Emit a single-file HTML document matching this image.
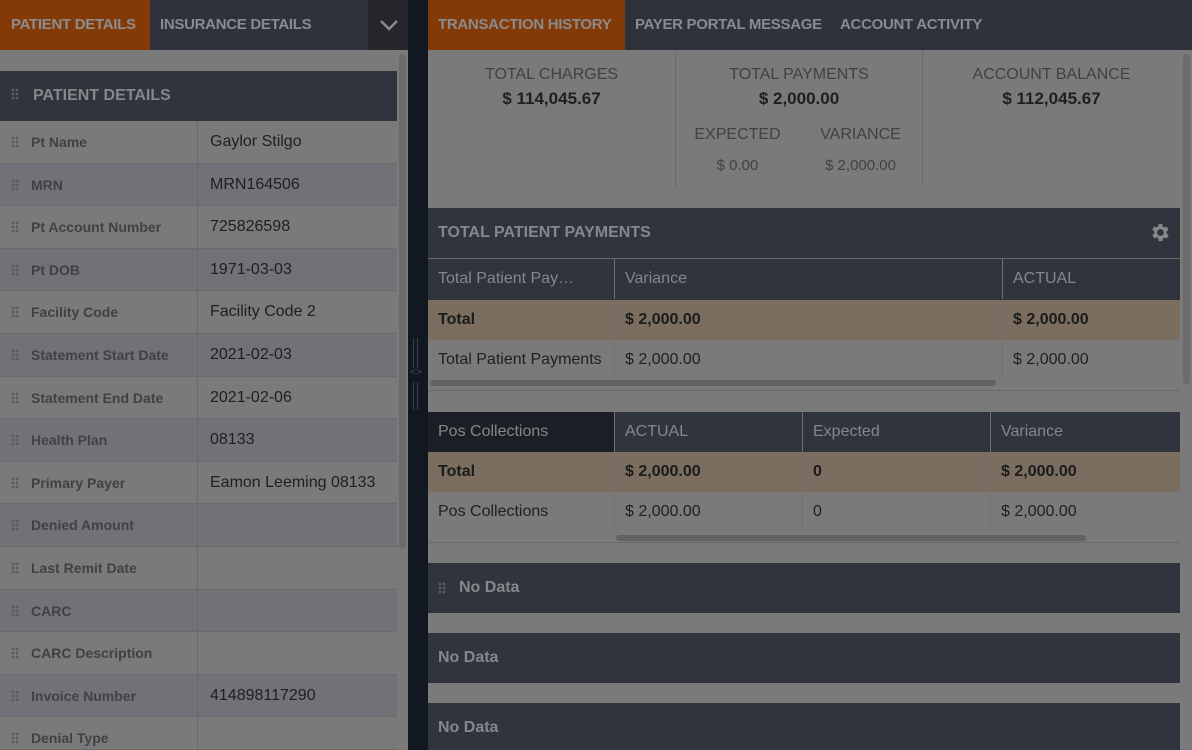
<!DOCTYPE html>
<html style="width:1192px;height:750px;overflow:hidden"><head><style>
*{box-sizing:border-box;margin:0;padding:0}
body{width:1192px;height:750px;overflow:hidden;background:#111820;font-family:"Liberation Sans",sans-serif;position:relative}
.abs{position:absolute}
.tab{position:absolute;top:0;height:50px;line-height:50px;font-size:15px;font-weight:bold;color:#8a8b8f;padding:0 10px;letter-spacing:-0.3px;white-space:nowrap}
.row{position:absolute;left:0;width:397px;height:42.6px;font-size:15px;border-bottom:1px solid #6a6a6a}
.row .l{position:absolute;left:0;top:0;width:198px;height:100%;border-right:1px solid #6a6a6a;padding-left:31px;line-height:42px;color:#3f4145;font-weight:bold;font-size:14px}
.row .v{position:absolute;left:210px;top:0;line-height:42px;color:#1e1f22;font-size:16px}
.dots{position:absolute;left:11px;top:15px;width:8px;height:12px;background:radial-gradient(circle,#5a5c60 1.3px,transparent 1.5px) 0 0/4px 4px}
.hdr{background:#30343c;color:#85878b;font-weight:bold;font-size:16px}
.cell{position:absolute;font-size:16px;line-height:40px;padding-left:10px;border-right:1px solid #707070}
</style></head><body>
<div class="abs" style="left:0;top:0;width:408px;height:750px;background:#7a7a7a"></div>
<div class="abs" style="left:0;top:0;width:408px;height:50px;background:#2f323b"></div>
<div class="abs" style="left:0;top:0;width:150px;height:50px;background:#833a06"></div>
<div class="tab" style="left:1px;color:#8c8d90">PATIENT DETAILS</div>
<div class="tab" style="left:150px">INSURANCE DETAILS</div>
<div class="abs" style="left:368px;top:0;width:40px;height:50px;background:#25272d"></div>
<svg class="abs" style="left:379px;top:18px" width="20" height="14"><path d="M2 3 L10 11 L18 3" stroke="#8a8b8f" stroke-width="2.5" fill="none"/></svg>
<div class="abs" style="left:399px;top:54px;width:7px;height:495px;background:#6c6c6c;border-radius:3px"></div>
<div class="abs hdr" style="left:0;top:71px;width:397px;height:50px;line-height:50px;padding-left:33px">PATIENT DETAILS</div>
<div class="dots" style="top:88px"></div>
<div id="rows"></div>
<div class="abs" style="left:428px;top:0;width:764px;height:750px;background:#7a7a7a"></div>
<div class="abs" style="left:428px;top:0;width:764px;height:50px;background:#2f323b"></div>
<div class="abs" style="left:428px;top:0;width:197px;height:50px;background:#833a06"></div>
<div class="tab" style="left:428px">TRANSACTION HISTORY</div>
<div class="tab" style="left:625px">PAYER PORTAL MESSAGE</div>
<div class="tab" style="left:830px">ACCOUNT ACTIVITY</div>
<div class="abs" style="left:1183px;top:54px;width:7px;height:330px;background:#6c6c6c;border-radius:3px"></div>
<div class="abs" style="left:675px;top:50px;width:1px;height:137px;background:#6a6a6a"></div>
<div class="abs" style="left:922px;top:50px;width:1px;height:137px;background:#6a6a6a"></div>
<div class="abs" style="left:428px;top:66px;width:247px;text-align:center;color:#3f4145;font-size:16px">TOTAL CHARGES<br><b style="color:#1e1f22;line-height:30px;font-size:17px">$ 114,045.67</b></div>
<div class="abs" style="left:676px;top:66px;width:246px;text-align:center;color:#3f4145;font-size:16px">TOTAL PAYMENTS<br><b style="color:#1e1f22;line-height:30px;font-size:17px">$ 2,000.00</b></div>
<div class="abs" style="left:923px;top:66px;width:257px;text-align:center;color:#3f4145;font-size:16px">ACCOUNT BALANCE<br><b style="color:#1e1f22;line-height:30px;font-size:17px">$ 112,045.67</b></div>
<div class="abs" style="left:676px;top:126px;width:123px;text-align:center;color:#3f4145;font-size:16px">EXPECTED<br><span style="line-height:44px;font-size:15px">$ 0.00</span></div>
<div class="abs" style="left:799px;top:126px;width:123px;text-align:center;color:#3f4145;font-size:16px">VARIANCE<br><span style="line-height:44px;font-size:15px">$ 2,000.00</span></div>
<div class="abs hdr" style="left:428px;top:208px;width:752px;height:50px;line-height:50px;padding-left:10px">TOTAL PATIENT PAYMENTS</div>
<svg class="abs" style="left:1148px;top:221px" width="23" height="23" viewBox="0 0 24 24"><path fill="#85878b" fill-rule="evenodd" d="M19.4 13a7.5 7.5 0 000-2l2.1-1.6-2-3.5-2.5 1a7 7 0 00-1.7-1L15 3h-4l-.4 2.7a7 7 0 00-1.7 1l-2.5-1-2 3.5L6.6 11a7.5 7.5 0 000 2l-2.1 1.6 2 3.5 2.5-1a7 7 0 001.7 1L11 21h4l.4-2.7a7 7 0 001.7-1l2.5 1 2-3.5zM13 15.5a3.5 3.5 0 110-7 3.5 3.5 0 010 7z"/></svg>
<div class="abs" style="left:428px;top:258px;width:752px;height:1px;background:#6a6a6a"></div>
<div class="abs" style="left:428px;top:259px;width:752px;height:41px;background:#30343c;color:#85878b">
<div class="cell" style="left:0;width:187px">Total Patient Pay…</div><div class="cell" style="left:187px;width:388px">Variance</div><div class="cell" style="left:575px;border:0">ACTUAL</div></div>
<div class="abs" style="left:428px;top:300px;width:752px;height:40px;background:#7b6e60;font-weight:bold;color:#1a1a1a">
<div class="cell" style="left:0;width:187px">Total</div><div class="cell" style="left:187px;width:388px">$ 2,000.00</div><div class="cell" style="left:575px;border:0">$ 2,000.00</div></div>
<div class="abs" style="left:428px;top:340px;width:752px;height:40px;color:#1e1f22">
<div class="cell" style="left:0;width:187px">Total Patient Payments</div><div class="cell" style="left:187px;width:388px">$ 2,000.00</div><div class="cell" style="left:575px;border:0">$ 2,000.00</div></div>
<div class="abs" style="left:430px;top:380px;width:566px;height:6px;background:#626262;border-radius:3px"></div>
<div class="abs" style="left:428px;top:390px;width:752px;height:1px;background:#6a6a6a"></div>
<div class="abs" style="left:428px;top:412px;width:752px;height:40px;background:#30343c;color:#85878b">
<div class="cell" style="left:0;width:187px;background:#1c1f25;height:40px">Pos Collections</div><div class="cell" style="left:187px;width:188px">ACTUAL</div><div class="cell" style="left:375px;width:188px">Expected</div><div class="cell" style="left:563px;border:0">Variance</div></div>
<div class="abs" style="left:428px;top:452px;width:752px;height:40px;background:#7b6e60;font-weight:bold;color:#1a1a1a">
<div class="cell" style="left:0;width:187px">Total</div><div class="cell" style="left:187px;width:188px">$ 2,000.00</div><div class="cell" style="left:375px;width:188px">0</div><div class="cell" style="left:563px;border:0">$ 2,000.00</div></div>
<div class="abs" style="left:428px;top:492px;width:752px;height:40px;color:#1e1f22">
<div class="cell" style="left:0;width:187px">Pos Collections</div><div class="cell" style="left:187px;width:188px">$ 2,000.00</div><div class="cell" style="left:375px;width:188px">0</div><div class="cell" style="left:563px;border:0">$ 2,000.00</div></div>
<div class="abs" style="left:616px;top:535px;width:470px;height:6px;background:#626262;border-radius:3px"></div>
<div class="abs" style="left:428px;top:542px;width:752px;height:1px;background:#6a6a6a"></div>
<div class="abs hdr" style="left:428px;top:563px;width:752px;height:50px;line-height:50px;padding-left:31px">No Data</div>
<div class="dots" style="left:438px;top:582px"></div>
<div class="abs hdr" style="left:428px;top:633px;width:752px;height:50px;line-height:50px;padding-left:10px">No Data</div>
<div class="abs hdr" style="left:428px;top:703px;width:752px;height:47px;line-height:50px;padding-left:10px">No Data</div>
<div class="abs" style="left:413px;top:338px;width:5px;height:30px;border-left:1px solid #3a4048;border-right:1px solid #3a4048"></div>
<div class="abs" style="left:410px;top:367px;color:#4a5058;font-size:10px">&lt;&gt;</div>
<div class="abs" style="left:413px;top:382px;width:5px;height:28px;border-left:1px solid #3a4048;border-right:1px solid #3a4048"></div>
<script>
var d=[["Pt Name","Gaylor Stilgo"],["MRN","MRN164506"],["Pt Account Number","725826598"],["Pt DOB","1971-03-03"],["Facility Code","Facility Code 2"],["Statement Start Date","2021-02-03"],["Statement End Date","2021-02-06"],["Health Plan","08133"],["Primary Payer","Eamon Leeming 08133"],["Denied Amount",""],["Last Remit Date",""],["CARC",""],["CARC Description",""],["Invoice Number","414898117290"],["Denial Type",""]];
var h="";d.forEach(function(r,i){var t=121+i*42.6;var hh=Math.min(42.6,750-t);h+='<div class="row" style="top:'+t+'px;height:'+hh+'px;overflow:hidden;background:'+(i%2?'#707278':'#7a7a7a')+'"><div class="dots"></div><div class="l">'+r[0]+'</div><div class="v">'+r[1]+'</div></div>';});
document.getElementById("rows").innerHTML=h;
</script>
</body></html>
